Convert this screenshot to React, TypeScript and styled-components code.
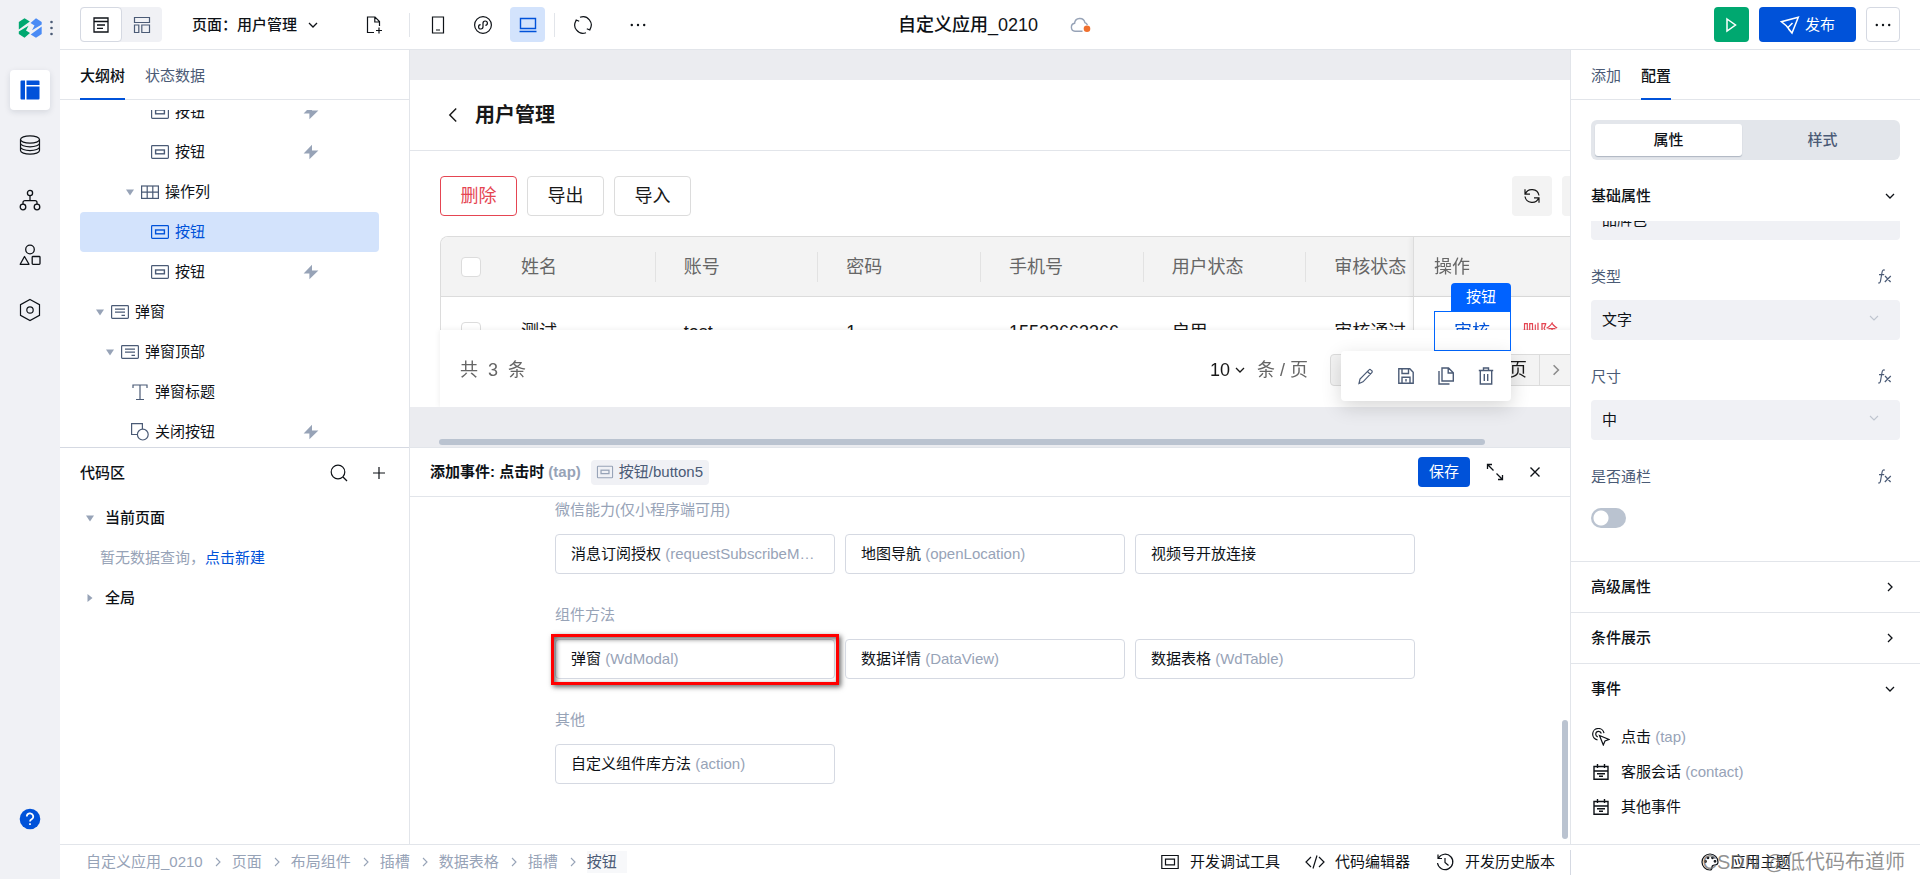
import React from "react";
import styled, { createGlobalStyle, css } from "styled-components";

/* ---------- tokens ---------- */
const c = {
  blue: "#0052d9",
  ink: "#0e1217",
  slate: "#4b5b76",
  mute: "#97a3b7",
  line: "#e2e5ea",
  edge: "#d5d9e2",
  fill: "#f0f1f5",
  select: "#d3e3fc",
  red: "#e54552",
};

const Global = createGlobalStyle`
  * { box-sizing: border-box; }
  body { margin: 0; font: 15px/20px "Liberation Sans", "Noto Sans CJK SC", sans-serif; color: ${c.ink}; background: #fff; }
  button, select, input { font: inherit; color: inherit; margin: 0; }
  button { border: 0; padding: 0; background: none; cursor: pointer; }
  a { text-decoration: none; color: inherit; }
  h1, h2, h3, ul, ol { margin: 0; padding: 0; font: inherit; list-style: none; }
  svg { display: block; flex: none; }
`;

/* ---------- icons ---------- */
type IconProps = { w?: number; h?: number; box?: string; sw?: number; children: React.ReactNode };
const Icon = ({ w = 20, h = 20, box, sw = 1.2, children }: IconProps) => (
  <svg width={w} height={h} viewBox={box ?? `0 0 ${w} ${h}`} fill="none" stroke="currentColor" strokeWidth={sw} aria-hidden="true">
    {children}
  </svg>
);

const Chevron = ({ dir = "down", s = 10, sw = 1.3 }: { dir?: "down" | "right" | "left"; s?: number; sw?: number }) => (
  <Icon w={s} h={s} box="0 0 10 10" sw={sw}>
    <path d={dir === "down" ? "M1 3l4 4 4-4" : dir === "right" ? "M3 1l4 4-4 4" : "M7 1L3 5l4 4"} />
  </Icon>
);
const Caret = ({ open }: { open?: boolean }) => (
  <Icon w={8} h={8}>
    <path fill="#97a3b7" stroke="none" d={open ? "M0 1.500h8L4 7.500z" : "M1.500 0v8l5-4z"} />
  </Icon>
);
const ButtonGlyph = ({ s = 20 }: { s?: number }) => (
  <Icon w={s} h={s} box="0 0 20 20">
    <rect x="1.600" y="3.600" width="16.800" height="12.800" rx="0.800" />
    <rect x="5.600" y="8" width="8.800" height="3.800" strokeWidth="1.400" />
  </Icon>
);
const GridGlyph = () => (
  <Icon>
    <rect x="1.600" y="4" width="16.800" height="12.400" />
    <path d="M1.600 10.200h16.800M7.200 4v12.400M12.800 4v12.400" />
  </Icon>
);
const ModalGlyph = () => (
  <Icon>
    <rect x="1.600" y="3.600" width="16.800" height="12.800" rx="0.800" />
    <path d="M5 7.200h10M5 10.200h10M11.500 13.400h3.500" />
  </Icon>
);
const TextGlyph = () => (
  <Icon>
    <path d="M3 6V3h14v3M10 3v14.500M6 17.500h8" />
  </Icon>
);
const ShapeGlyph = () => (
  <Icon>
    <path d="M8 12.500H1.600V1.600h10.800V7" />
    <circle cx="12.800" cy="12.600" r="5.400" />
  </Icon>
);
const Bolt = () => (
  <Icon w={16} h={16}>
    <path fill="#97a3b7" stroke="none" d="M9 .8L.6 9.500h5.800v5.700L15.400 6.500H9z" />
  </Icon>
);
const Dots = () => (
  <Icon w={16} h={4}>
    <g fill="currentColor" stroke="none">
      <circle cx="1.800" cy="2" r="1.200" />
      <circle cx="8" cy="2" r="1.200" />
      <circle cx="14.200" cy="2" r="1.200" />
    </g>
  </Icon>
);
const EventGlyph = () => (
  <Icon w={18} h={18} sw={1.4}>
    <path d="M2 3.500h14v12.700H2zM2 8h14M5.500 1v4M12.500 1v4M5 10.800h8M7 13.300h4" />
  </Icon>
);
const FxGlyph = () => (
  <Icon w={16} h={18}>
    <path d="M7.800 2.200C6.400 1.400 5.400 2.300 5.100 4L3.500 13c-.3 1.800-1.200 2.300-2.300 1.800M2 6.700h5.200M8 8l5.600 6M13.800 8L7.800 14" />
  </Icon>
);
const RefreshGlyph = () => (
  <Icon w={18} h={18}>
    <path d="M2.200 7.200A7.200 7.200 0 0 1 16 8.500M15.800 10.800A7.200 7.200 0 0 1 2 9.500M2 2.200v5h5M16 15.800v-5h-5" />
  </Icon>
);

/* ---------- shell ---------- */
const Shell = styled.div`
  display: flex;
  height: 100vh;
  overflow: hidden;
`;
const Rail = styled.nav`
  flex: none;
  width: 60px;
  background: ${c.fill};
  display: flex;
  flex-direction: column;
  align-items: center;
  padding-bottom: 40px;
`;
const Brand = styled.div`
  height: 55px;
  width: 60px;
  padding-left: 18px;
  display: flex;
  align-items: center;
  gap: 8px;
`;
const RailItems = styled.div`
  flex: 1;
  display: flex;
  flex-direction: column;
  gap: 15px;
  padding-top: 15px;
`;
const RailButton = styled.button<{ $on?: boolean }>`
  width: 40px;
  height: 40px;
  display: grid;
  place-items: center;
  border-radius: 4px;
  ${(p) => p.$on && css`
    background: #fff;
    color: ${c.blue};
    box-shadow: 0 2px 6px rgba(20, 30, 60, 0.12);
  `}
`;
const Work = styled.div`
  flex: 1;
  min-width: 0;
  display: flex;
  flex-direction: column;
`;

/* ---------- header ---------- */
const Header = styled.header`
  flex: none;
  height: 50px;
  border-bottom: 1px solid ${c.line};
  padding: 0 20px;
  display: grid;
  grid-template-columns: 1fr auto 1fr;
  align-items: center;
`;
const HeaderGroup = styled.div<{ $gap?: number; $end?: boolean }>`
  display: flex;
  align-items: center;
  gap: ${(p) => p.$gap ?? 0}px;
  justify-content: ${(p) => (p.$end ? "flex-end" : "flex-start")};
`;
const ViewSwitch = styled.div`
  display: flex;
  border-radius: 4px;
  background: ${c.fill};
  color: ${c.slate};
`;
const ViewOption = styled.button<{ $on?: boolean }>`
  width: ${(p) => (p.$on ? 42 : 40)}px;
  height: 35px;
  display: grid;
  place-items: center;
  border-radius: 4px;
  ${(p) => p.$on && css`background: #fff; border: 1px solid ${c.edge}; color: ${c.ink};`}
`;
const PageMenu = styled.button`
  display: flex;
  align-items: center;
  gap: 11px;
  margin: 0 38px 0 30px;
  font-weight: 500;
`;
const Tool = styled.button<{ $on?: boolean }>`
  width: 35px;
  height: 35px;
  display: grid;
  place-items: center;
  border-radius: 4px;
  ${(p) => p.$on && css`background: ${c.select}; color: ${c.blue};`}
`;
const Rule = styled.span<{ $left: number }>`
  width: 1px;
  height: 24px;
  margin: 0 10px 0 ${(p) => p.$left}px;
  background: ${c.line};
`;
const More = styled(Tool)`
  margin-left: 20px;
`;
const AppTitle = styled.div`
  display: flex;
  align-items: center;
  gap: 32px;
  padding-left: 10px;
  color: ${c.mute};
`;
const AppName = styled.h1`
  font-size: 18px;
  line-height: 24px;
  font-weight: 500;
  color: ${c.ink};
`;
const HeaderButton = styled.button<{ $kind: "run" | "main" | "plain" }>`
  height: 35px;
  min-width: 34px;
  display: flex;
  align-items: center;
  justify-content: center;
  gap: 5px;
  border-radius: 4px;
  color: #fff;
  ${(p) => p.$kind === "run" && css`width: 35px; background: #00a870;`}
  ${(p) => p.$kind === "main" && css`padding: 0 21px; background: ${c.blue};`}
  ${(p) => p.$kind === "plain" && css`border: 1px solid ${c.edge}; color: ${c.ink};`}
`;

/* ---------- side panels ---------- */
const Main = styled.div`
  flex: 1;
  min-height: 0;
  display: flex;
`;
const Side = styled.aside<{ $side: "left" | "right" }>`
  flex: none;
  width: 350px;
  border-${(p) => (p.$side === "left" ? "right" : "left")}: 1px solid ${c.line};
  display: flex;
  flex-direction: column;
`;
const Tabs = styled.div`
  flex: none;
  height: 50px;
  padding-left: 20px;
  border-bottom: 1px solid ${c.line};
  display: flex;
  gap: 20px;
`;
const Tab = styled.button<{ $on?: boolean }>`
  height: 50px;
  padding-top: 4px;
  color: ${c.slate};
  border-bottom: 2px solid transparent;
  ${(p) => p.$on && css`color: ${c.ink}; font-weight: 500; border-color: ${c.blue};`}
`;
const Outline = styled.section`
  flex: 1 1 398px;
  min-height: 0;
  display: flex;
  flex-direction: column;
  border-bottom: 1px solid ${c.edge};
`;
const TreeView = styled.div`
  flex: 1;
  min-height: 0;
  overflow: hidden;
  margin: 10px 30px 0 20px;
`;
const Tree = styled.ul`
  margin-top: -18px;
`;
const TreeRow = styled.li<{ $indent: number; $on?: boolean }>`
  height: 40px;
  padding: 0 60px 0 ${(p) => p.$indent}px;
  display: flex;
  align-items: center;
  border-radius: 4px;
  color: ${(p) => (p.$on ? c.blue : c.slate)};
  background: ${(p) => (p.$on ? c.select : "transparent")};
`;
const CaretSlot = styled.span`
  width: 20px;
  display: grid;
  place-items: center;
`;
const TreeLabel = styled.span<{ $on?: boolean }>`
  flex: 1;
  padding-left: 5px;
  color: ${(p) => (p.$on ? c.blue : c.ink)};
`;
const CodeArea = styled.section`
  flex: 1 1 396px;
`;
const CodeHead = styled.div`
  height: 50px;
  padding: 0 20px;
  display: flex;
  align-items: center;
  gap: 20px;
`;
const CodeTitle = styled.h2`
  flex: 1;
  font-weight: 500;
`;
const MiniButton = styled.button`
  width: 20px;
  height: 20px;
  display: grid;
  place-items: center;
`;
const CodeRow = styled.div<{ $strong?: boolean }>`
  height: 40px;
  padding-left: ${(p) => (p.$strong ? 20 : 40)}px;
  display: flex;
  align-items: center;
  gap: ${(p) => (p.$strong ? 5 : 0)}px;
  font-weight: ${(p) => (p.$strong ? 500 : 400)};
  color: ${(p) => (p.$strong ? c.ink : c.mute)};
`;
const Link = styled.a`
  color: ${c.blue};
`;

/* ---------- canvas ---------- */
const Center = styled.main`
  flex: 1;
  min-width: 0;
  display: flex;
  flex-direction: column;
`;
const Canvas = styled.section`
  flex: 1 1 398px;
  min-height: 0;
  overflow: hidden;
  padding-top: 30px;
  background: #ebecf0;
  border-bottom: 1px solid ${c.line};
  color: #181818;
`;
const Sheet = styled.div`
  width: calc(100% + 80px);
  background: #fff;
`;
const SheetHead = styled.div`
  height: 71px;
  padding-left: 35px;
  border-bottom: 1px solid ${c.line};
  display: flex;
  align-items: center;
  gap: 14px;
`;
const SheetTitle = styled.h2`
  font-size: 20px;
  line-height: 28px;
  font-weight: 700;
`;
const SheetBody = styled.div`
  padding: 25px 30px 0;
`;
const ActionBar = styled.div`
  display: flex;
  gap: 10px;
  margin-bottom: 20px;
`;
const ActionButton = styled.button<{ $danger?: boolean }>`
  width: 77px;
  height: 40px;
  font-size: 18px;
  border-radius: 4px;
  border: 1px solid ${(p) => (p.$danger ? c.red : "#dcdcdc")};
  color: ${(p) => (p.$danger ? c.red : "#181818")};
`;
const SquareButton = styled.button`
  width: 40px;
  height: 40px;
  display: grid;
  place-items: center;
  border-radius: 4px;
  background: #f3f3f3;
`;
const SquareGroup = styled.div`
  display: flex;
  gap: 10px;
  margin-left: auto;
  padding-right: 18px;
`;
const TableArea = styled.div`
  position: relative;
`;
const TableClip = styled.div`
  height: 94px;
  overflow: hidden;
  border: 1px solid #dcdcdc;
  border-bottom: 0;
  border-radius: 8px 8px 0 0;
`;
const DataTable = styled.table`
  table-layout: fixed;
  width: 1234px;
  border-collapse: separate;
  border-spacing: 0;
  font-size: 18px;
  line-height: 24px;
`;
const Col = styled.col<{ $width?: number }>`
  width: ${(p) => (p.$width ? `${p.$width}px` : "auto")};
`;
const Th = styled.th<{ $rule?: boolean }>`
  height: 60px;
  padding: 0 0 0 28px;
  text-align: left;
  font-weight: 400;
  color: #666;
  border-bottom: 1px solid #dcdcdc;
  background: ${(p) => (p.$rule ? "linear-gradient(#e2e2e2, #e2e2e2) right center / 1px 30px no-repeat" : "none")} #f3f3f3;
`;
const Td = styled.td`
  height: 70px;
  padding: 0 0 0 28px;
  background: #fff;
`;
const pinned = css`
  position: sticky;
  right: 0;
  padding-left: 20px;
  border-left: 1px solid #dcdcdc;
  box-shadow: -3px 0 4px rgba(0, 0, 0, 0.04);
`;
const PinTh = styled(Th)`${pinned}`;
const PinTd = styled(Td)`${pinned}`;
const CheckTh = styled(Th)`padding-left: 20px;`;
const CheckTd = styled(Td)`padding-left: 20px;`;
const Check = styled.input`
  appearance: none;
  display: block;
  width: 20px;
  height: 20px;
  border: 1px solid #dcdcdc;
  border-radius: 4px;
  background: #fff;
`;
const CellButton = styled.button<{ $danger?: boolean }>`
  width: 68px;
  padding-left: 20px;
  text-align: left;
  color: ${(p) => (p.$danger ? c.red : c.blue)};
`;
const Pager = styled.div`
  position: relative;
  height: 77px;
  padding: 2px 0 0 20px;
  display: flex;
  align-items: center;
  background: #fff;
  box-shadow: 0 0 6px rgba(0, 0, 0, 0.08);
  clip-path: inset(-10px -10px 0 -10px);
  font-size: 18px;
  line-height: 24px;
  color: #666;
`;
const Total = styled.span`
  flex: 1;
  white-space: pre;
`;
const PageSize = styled.button`
  display: flex;
  align-items: center;
  gap: 5px;
  margin-right: 12px;
  color: #181818;
`;
const PageBox = styled.div`
  display: flex;
  margin-left: 22px;
  height: 32px;
  width: 290px;
  background: #f3f3f3;
  border: 1px solid #dcdcdc;
  border-radius: 4px;
  color: #181818;
`;
const PageField = styled.span`
  width: 209px;
  padding-right: 12px;
  line-height: 30px;
  text-align: right;
  border-right: 1px solid #dcdcdc;
`;
const PageNext = styled.button`
  width: 32px;
  display: grid;
  place-items: center;
  color: #8b8b8b;
`;
const Selection = styled.div`
  position: absolute;
  top: 75px;
  right: 109px;
  width: 77px;
  height: 40px;
  border: 1px solid #0066ff;
`;
const SelectionTag = styled.span`
  position: absolute;
  right: -1px;
  bottom: 39px;
  width: 60px;
  line-height: 28px;
  text-align: center;
  color: #fff;
  background: #0062ff;
  border-radius: 4px 4px 0 0;
`;
const SelectionTools = styled.div`
  position: absolute;
  right: -1px;
  top: 39px;
  width: 170px;
  height: 50px;
  padding: 0 5px;
  display: flex;
  align-items: center;
  background: #fff;
  border-radius: 4px;
  box-shadow: 0 6px 20px rgba(0, 0, 0, 0.16);
  color: ${c.slate};
`;
const SelectionTool = styled.button`
  flex: 1;
  display: grid;
  place-items: center;
`;
const ScrollX = styled.div`
  height: 6px;
  margin: 32px 85px 0 29px;
  border-radius: 3px;
  background: #bac3d0;
`;

/* ---------- event panel ---------- */
const EventPanel = styled.section`
  flex: 1 1 396px;
  min-height: 0;
  display: flex;
  flex-direction: column;
`;
const EventHead = styled.div`
  flex: none;
  height: 49px;
  padding: 0 15px 0 20px;
  border-bottom: 1px solid ${c.line};
  display: flex;
  align-items: center;
`;
const EventTitle = styled.h2`
  font-weight: 700;
`;
const Hint = styled.span`
  color: ${c.mute};
`;
const TargetTag = styled.span`
  flex: none;
  display: flex;
  align-items: center;
  gap: 5px;
  height: 25px;
  margin: 0 auto 0 10px;
  padding: 0 6px 0 5px;
  border-radius: 4px;
  background: ${c.fill};
  color: ${c.mute};
`;
const TargetName = styled.span`
  color: ${c.slate};
`;
const SaveButton = styled.button`
  width: 52px;
  height: 30px;
  border-radius: 4px;
  background: ${c.blue};
  color: #fff;
`;
const HeadIcon = styled.button`
  width: 40px;
  height: 30px;
  display: grid;
  place-items: center;
`;
const HeadIcons = styled.div`
  display: flex;
  margin-left: 5px;
`;
const EventBody = styled.div`
  flex: 1;
  min-height: 0;
  overflow: hidden;
  display: flex;
  padding: 3px 2px 0 0;
`;
const Groups = styled.div`
  flex: 1;
  min-width: 0;
  padding: 0 12px 0 10px;
`;
const Group = styled.section`
  max-width: 860px;
  margin: 0 auto 31px;
`;
const GroupTitle = styled.h3`
  color: ${c.mute};
  margin-bottom: 14px;
`;
const Cards = styled.div`
  display: grid;
  grid-template-columns: repeat(3, minmax(0, 1fr));
  gap: 10px;
`;
const CardSlot = styled.div`
  position: relative;
`;
const Card = styled.button`
  display: block;
  width: 100%;
  height: 40px;
  padding: 0 15px;
  text-align: left;
  border: 1px solid ${c.edge};
  border-radius: 4px;
`;
const CardText = styled.span`
  display: block;
  overflow: hidden;
  white-space: nowrap;
  text-overflow: ellipsis;
  color: ${c.mute};
`;
const CardName = styled.span`
  color: ${c.ink};
`;
const Marker = styled.span`
  position: absolute;
  inset: -5px -4px -6px -4px;
  border: 3px solid #f00;
  box-shadow: 2px 2px 5px rgba(0, 0, 0, 0.6), inset 2px 2px 5px rgba(0, 0, 0, 0.6);
  pointer-events: none;
`;
const ScrollY = styled.div`
  flex: none;
  width: 6px;
  height: 119px;
  margin: auto 0 5px;
  border-radius: 3px;
  background: #bac3d0;
`;

/* ---------- property panel ---------- */
const Segment = styled.div`
  flex: none;
  margin: 20px 20px 11px;
  height: 40px;
  padding: 4px;
  display: flex;
  gap: 7px;
  border-radius: 6px;
  background: #e3e6eb;
`;
const SegmentOption = styled.button<{ $on?: boolean }>`
  flex: 1;
  border-radius: 3px;
  font-weight: 500;
  color: ${(p) => (p.$on ? c.ink : c.slate)};
  ${(p) => p.$on && css`background: #fff; box-shadow: 0 1px 1px rgba(75, 91, 118, 0.35);`}
`;
const SectionHead = styled.button<{ $line?: boolean }>`
  flex: none;
  width: 100%;
  height: ${(p) => (p.$line ? 51 : 50)}px;
  padding: 0 25px 0 20px;
  border-top: ${(p) => (p.$line ? `1px solid ${c.line}` : "0")};
  display: flex;
  align-items: center;
  justify-content: space-between;
  font-weight: 500;
`;
const Fields = styled.div`
  flex: none;
  padding: 0 20px;
`;
const ScrolledField = styled.div`
  height: 19px;
  overflow: hidden;
  display: flex;
  align-items: flex-end;
`;
const FieldHead = styled.div`
  height: 60px;
  padding: 14px 7px 0 0;
  display: flex;
  align-items: center;
  justify-content: space-between;
  color: ${c.slate};
`;
const SelectBox = styled.div`
  width: 100%;
  flex: none;
  display: grid;
  align-items: center;
  color: #bfc5cf;
  & > * { grid-area: 1 / 1; }
  & > svg { justify-self: end; margin: 0 21px 4px 0; pointer-events: none; }
`;
const Select = styled.select`
  appearance: none;
  width: 100%;
  height: 40px;
  padding: 0 40px 0 11px;
  border: 0;
  border-radius: 4px;
  background: ${c.fill};
  color: ${c.ink};
`;
const Switch = styled.input`
  appearance: none;
  display: block;
  width: 35px;
  height: 20px;
  margin: 8px 0 33px;
  border-radius: 10px;
  background: radial-gradient(circle at 10px 10px, #fff 7px, transparent 8px) #bac3d0;
`;
const EventList = styled.ul`
  padding: 5px 20px 0;
`;
const EventItem = styled.li`
  height: 35px;
  display: flex;
  align-items: center;
  gap: 11px;
  padding-left: 1px;
`;

/* ---------- footer ---------- */
const Footer = styled.footer`
  position: relative;
  flex: none;
  height: 35px;
  border-top: 1px solid ${c.line};
  display: flex;
  align-items: center;
`;
const Crumbs = styled.ol`
  flex: 1;
  padding-left: 26px;
  display: flex;
  align-items: center;
  color: ${c.mute};
`;
const Crumb = styled.li<{ $last?: boolean }>`
  display: flex;
  align-items: center;
  gap: 10px;
  margin-right: ${(p) => (p.$last ? 0 : 9)}px;
  ${(p) => p.$last && css`color: ${c.slate}; background: #f7f8fa; padding: 1px 10px 1px 0;`}
`;
const FooterTools = styled.div`
  display: flex;
  gap: 25px;
  padding-right: 15px;
`;
const FooterButton = styled.button`
  display: flex;
  align-items: center;
  gap: 10px;
`;
const FooterSide = styled.div`
  width: 350px;
  height: 25px;
  border-left: 1px solid ${c.edge};
  display: flex;
  align-items: center;
  justify-content: center;
`;
const Watermark = styled.span`
  position: absolute;
  right: 15px;
  top: 2px;
  font: 20px/30px "Liberation Sans", "Noto Sans CJK SC", sans-serif;
  color: rgba(110, 110, 110, 0.75);
`;

/* ---------- data ---------- */
type Node = { label: string; indent: number; icon: React.ReactNode; open?: boolean; bolt?: boolean; on?: boolean };
const nodes: Node[] = [
  { label: "按钮", indent: 50, icon: <ButtonGlyph />, bolt: true },
  { label: "按钮", indent: 50, icon: <ButtonGlyph />, bolt: true },
  { label: "操作列", indent: 40, icon: <GridGlyph />, open: true },
  { label: "按钮", indent: 50, icon: <ButtonGlyph />, on: true },
  { label: "按钮", indent: 50, icon: <ButtonGlyph />, bolt: true },
  { label: "弹窗", indent: 10, icon: <ModalGlyph />, open: true },
  { label: "弹窗顶部", indent: 20, icon: <ModalGlyph />, open: true },
  { label: "弹窗标题", indent: 30, icon: <TextGlyph /> },
  { label: "关闭按钮", indent: 30, icon: <ShapeGlyph />, bolt: true },
];

const columns = ["姓名", "账号", "密码", "手机号", "用户状态", "审核状态"];
const row = ["测试", "test", "1", "15522663366", "启用", "审核通过"];

type Method = { name: string; code?: string; marked?: boolean };
const groups: { title: string; items: Method[] }[] = [
  {
    title: "微信能力(仅小程序端可用)",
    items: [
      { name: "消息订阅授权", code: "requestSubscribeMessage" },
      { name: "地图导航", code: "openLocation" },
      { name: "视频号开放连接" },
    ],
  },
  {
    title: "组件方法",
    items: [
      { name: "弹窗", code: "WdModal", marked: true },
      { name: "数据详情", code: "DataView" },
      { name: "数据表格", code: "WdTable" },
    ],
  },
  { title: "其他", items: [{ name: "自定义组件库方法", code: "action" }] },
];

const crumbs = ["自定义应用_0210", "页面", "布局组件", "插槽", "数据表格", "插槽", "按钮"];

/* ---------- parts ---------- */
const LeftRail = () => (
  <Rail>
    <Brand>
      <svg width="24" height="20" viewBox="0 0 24 20" aria-hidden="true">
        <path fill="#00a870" d="M.8 4L6.500.3l5.300 3.200L.8 11.500z" />
        <path fill="#00a870" d="M.8 13.500L10.500 7.800 8 12.500l4 2.500-5.500 4.700-5.700-3.700z" />
        <path fill="#4a8bf5" d="M23.700 16L18 19.700l-5.300-3.200 11-8z" />
        <path fill="#4a8bf5" d="M23.700 6.500L14 12.200l2.500-4.700-4-2.500L18 .3l5.700 3.700z" />
      </svg>
      <Icon w={4} h={16}>
        <g fill="#4b5b76" stroke="none">
          <circle cx="1.500" cy="2" r="1.300" />
          <circle cx="1.500" cy="8" r="1.300" />
          <circle cx="1.500" cy="14" r="1.300" />
        </g>
      </Icon>
    </Brand>
    <RailItems>
      <RailButton $on aria-label="页面设计">
        <Icon>
          <path fill="currentColor" stroke="none" d="M1.500.5H5v19H1.500a1 1 0 0 1-1-1v-17a1 1 0 0 1 1-1zM6.500.5h12a1 1 0 0 1 1 1V5h-13zM6.500 6.500h13v12a1 1 0 0 1-1 1h-12z" />
        </Icon>
      </RailButton>
      <RailButton aria-label="数据">
        <Icon w={22} h={22}>
          <ellipse cx="11" cy="5.500" rx="9.500" ry="3.700" />
          <path d="M1.500 5.500v11c0 2 4.300 3.700 9.500 3.700s9.500-1.700 9.500-3.700v-11M1.500 9.200c0 2 4.300 3.700 9.500 3.700s9.500-1.700 9.500-3.700M1.500 12.900c0 2 4.300 3.700 9.500 3.700s9.500-1.700 9.500-3.700" />
        </Icon>
      </RailButton>
      <RailButton aria-label="流程">
        <Icon w={22} h={22} sw={1.3}>
          <circle cx="11" cy="4" r="2.600" />
          <circle cx="4" cy="18" r="2.800" />
          <circle cx="18" cy="18" r="2.800" />
          <path d="M11 6.600v5M4 15.200v-1.600a2 2 0 0 1 2-2h10a2 2 0 0 1 2 2v1.600" />
        </Icon>
      </RailButton>
      <RailButton aria-label="组件">
        <Icon w={22} h={22} sw={1.3}>
          <circle cx="11" cy="5.500" r="4.300" />
          <path d="M5.500 12.500L10 20.300H1.200z" strokeLinejoin="round" />
          <rect x="13.200" y="12.500" width="7.800" height="7.800" rx="0.800" />
        </Icon>
      </RailButton>
      <RailButton aria-label="设置">
        <Icon w={22} h={24}>
          <path d="M11 1.500l9.500 5.200v10.600L11 22.500l-9.500-5.200V6.700z" />
          <circle cx="11" cy="12" r="3.200" />
        </Icon>
      </RailButton>
    </RailItems>
    <RailButton aria-label="帮助">
      <Icon w={22} h={22}>
        <circle cx="11" cy="11" r="10.300" fill="#0052d9" stroke="none" />
        <path stroke="#fff" strokeWidth="1.700" d="M7.800 8.600a3.200 3.200 0 1 1 4.800 2.700c-1 .6-1.600 1.100-1.600 2.200M11 15.200v1.800" />
      </Icon>
    </RailButton>
  </Rail>
);

const TopBar = () => (
  <Header>
    <HeaderGroup>
      <ViewSwitch>
        <ViewOption $on aria-label="编辑视图">
          <Icon w={18} h={18} sw={1.3}>
            <path d="M2 2h14v14H2zM2 5.500h14M5 9h8M5 12.300h6" />
          </Icon>
        </ViewOption>
        <ViewOption aria-label="布局视图">
          <Icon w={18} h={18}>
            <path d="M1.500 1.500h15v5h-15zM1.500 9h4.300v7.500H1.500zM8.800 9h7.700v7.500H8.800z" />
          </Icon>
        </ViewOption>
      </ViewSwitch>
      <PageMenu>页面：用户管理<Chevron /></PageMenu>
      <Tool aria-label="新建页面">
        <Icon w={18} h={20}>
          <path d="M9 17.500H2.500V2H10l4.500 4.500v4.500M9.800 2v5h4.700M14 12.500v6M11 15.500h6" />
        </Icon>
      </Tool>
      <Rule $left={18} />
      <HeaderGroup $gap={10}>
        <Tool aria-label="手机">
          <Icon w={14} h={18}>
            <path d="M1.500 1h11v16h-11zM5 14h4" />
          </Icon>
        </Tool>
        <Tool aria-label="小程序">
          <Icon>
            <circle cx="10" cy="10" r="8.400" />
            <path d="M7.600 9.600a2.200 2.200 0 1 0 2.400 2.200V8.200a2.200 2.200 0 1 1 2.400 2.200" />
          </Icon>
        </Tool>
        <Tool $on aria-label="电脑">
          <Icon sw={1.4}>
            <path d="M2.500 3.500h15v10h-15zM1.500 16.500h17" />
          </Icon>
        </Tool>
      </HeaderGroup>
      <Rule $left={9} />
      <Tool aria-label="刷新">
        <Icon>
          <path d="M7 2.300A8.200 8.200 0 0 1 16.800 14.500M13 17.700A8.200 8.200 0 0 1 3.200 5.500M2 8l1.200-3 3 1.300M18 12l-1.200 3-3-1.300" />
        </Icon>
      </Tool>
      <More aria-label="更多"><Dots /></More>
    </HeaderGroup>
    <AppTitle>
      <AppName>自定义应用_0210</AppName>
      <Icon w={22} h={18} sw={1.4}>
        <path d="M12.500 15.200H5A4 4 0 0 1 4.600 7.300a5.200 5.200 0 0 1 10.300-.6 4 4 0 0 1 2.500 2.300" />
        <circle cx="17" cy="12.700" r="3.300" fill="#f0702e" stroke="none" />
      </Icon>
    </AppTitle>
    <HeaderGroup $gap={10} $end>
      <HeaderButton $kind="run" aria-label="预览">
        <Icon w={14} h={16} sw={1.5}>
          <path d="M3 2l8.500 6L3 14z" />
        </Icon>
      </HeaderButton>
      <HeaderButton $kind="main">
        <Icon sw={1.5}>
          <path d="M18.300 2.200L1.500 6.700l4.800 4.100L12 18zM18.300 2.200L12 18l-3.500-4M8 12.500l4.500-4.500" />
        </Icon>
        发布
      </HeaderButton>
      <HeaderButton $kind="plain" aria-label="更多操作"><Dots /></HeaderButton>
    </HeaderGroup>
  </Header>
);

const LeftPanel = () => (
  <Side $side="left">
    <Outline>
      <Tabs>
        <Tab $on>大纲树</Tab>
        <Tab>状态数据</Tab>
      </Tabs>
      <TreeView>
        <Tree>
          {nodes.map((n, i) => (
            <TreeRow key={i} $indent={n.indent} $on={n.on}>
              <CaretSlot>{n.open && <Caret open />}</CaretSlot>
              {n.icon}
              <TreeLabel $on={n.on}>{n.label}</TreeLabel>
              {n.bolt && <Bolt />}
            </TreeRow>
          ))}
        </Tree>
      </TreeView>
    </Outline>
    <CodeArea>
      <CodeHead>
        <CodeTitle>代码区</CodeTitle>
        <MiniButton aria-label="搜索">
          <Icon w={18} h={18}>
            <circle cx="8" cy="8" r="6.800" />
            <path d="M13 13l4 4" />
          </Icon>
        </MiniButton>
        <MiniButton aria-label="新增">
          <Icon w={14} h={14}><path d="M7 1v12M1 7h12" /></Icon>
        </MiniButton>
      </CodeHead>
      <CodeRow $strong><CaretSlot><Caret open /></CaretSlot>当前页面</CodeRow>
      <CodeRow>暂无数据查询，<Link href="#new">点击新建</Link></CodeRow>
      <CodeRow $strong><CaretSlot><Caret /></CaretSlot>全局</CodeRow>
    </CodeArea>
  </Side>
);

const CanvasView = () => (
  <Canvas>
    <Sheet>
      <SheetHead>
        <Chevron dir="left" s={16} sw={0.9} />
        <SheetTitle>用户管理</SheetTitle>
      </SheetHead>
      <SheetBody>
        <ActionBar>
          <ActionButton $danger>删除</ActionButton>
          <ActionButton>导出</ActionButton>
          <ActionButton>导入</ActionButton>
          <SquareGroup>
            <SquareButton aria-label="刷新表格"><RefreshGlyph /></SquareButton>
            <SquareButton aria-label="列设置" />
          </SquareGroup>
        </ActionBar>
        <TableArea>
          <TableClip>
            <DataTable>
              <colgroup>
                <Col $width={52} />
                {columns.map((n) => <Col key={n} />)}
                <Col $width={206} />
              </colgroup>
              <thead>
                <tr>
                  <CheckTh><Check type="checkbox" aria-label="全选" /></CheckTh>
                  {columns.map((n) => <Th key={n} $rule>{n}</Th>)}
                  <PinTh>操作</PinTh>
                </tr>
              </thead>
              <tbody>
                <tr>
                  <CheckTd><Check type="checkbox" aria-label="选择此行" /></CheckTd>
                  {row.map((v) => <Td key={v}>{v}</Td>)}
                  <PinTd>
                    <CellButton>审核</CellButton>
                    <CellButton $danger>删除</CellButton>
                  </PinTd>
                </tr>
              </tbody>
            </DataTable>
          </TableClip>
          <Pager>
            <Total>共  3  条</Total>
            <PageSize>10<Chevron /></PageSize>
            条 / 页
            <PageBox>
              <PageField>页</PageField>
              <PageNext aria-label="下一页"><Chevron dir="right" s={12} /></PageNext>
            </PageBox>
          </Pager>
          <Selection>
            <SelectionTag>按钮</SelectionTag>
            <SelectionTools>
              <SelectionTool aria-label="编辑">
                <Icon w={18} h={18}><path d="M2 16.500l1-4.500L12 2.800a1.200 1.200 0 0 1 1.800 0l1 1a1.200 1.200 0 0 1 0 1.800L6 14.800zM10.500 4.500l3 3" /></Icon>
              </SelectionTool>
              <SelectionTool aria-label="保存为模板">
                <Icon w={18} h={18} sw={1.4}><path d="M1.800 1.800h11l3.400 3.400v11H1.800zM5 1.800v4.700h6.500V1.800M5 16.200v-6h8v6M9 12v2.500" /></Icon>
              </SelectionTool>
              <SelectionTool aria-label="复制">
                <Icon w={18} h={20} sw={1.4}><path d="M5 2h6.500l4.800 4.800V15H5zM11.200 2v5h5M2 5v13h10.500" /></Icon>
              </SelectionTool>
              <SelectionTool aria-label="移除">
                <Icon w={16} h={20} sw={1.4}><path d="M.8 4.500h14.400M2.300 4.500V18h11.400V4.500M5.500 4.500V2h5v2.500M6.300 8v7M9.700 8v7" /></Icon>
              </SelectionTool>
            </SelectionTools>
          </Selection>
        </TableArea>
      </SheetBody>
    </Sheet>
    <ScrollX />
  </Canvas>
);

const EventEditor = () => (
  <EventPanel>
    <EventHead>
      <EventTitle>添加事件: 点击时 <Hint>(tap)</Hint></EventTitle>
      <TargetTag><ButtonGlyph s={18} /><TargetName>按钮/button5</TargetName></TargetTag>
      <SaveButton>保存</SaveButton>
      <HeadIcons>
        <HeadIcon aria-label="展开">
          <Icon w={18} h={18} sw={1.3}><path d="M1.500 6V1.500H6M1.500 1.500l6 6M16.500 12v4.500H12M16.500 16.500l-6-6" /></Icon>
        </HeadIcon>
        <HeadIcon aria-label="关闭">
          <Icon w={12} h={12} sw={1.4}><path d="M1.500 1.500l9 9M10.500 1.500l-9 9" /></Icon>
        </HeadIcon>
      </HeadIcons>
    </EventHead>
    <EventBody>
      <Groups>
        {groups.map((g) => (
          <Group key={g.title}>
            <GroupTitle>{g.title}</GroupTitle>
            <Cards>
              {g.items.map((m) => (
                <CardSlot key={m.name}>
                  <Card>
                    <CardText><CardName>{m.name}</CardName>{m.code && ` (${m.code})`}</CardText>
                  </Card>
                  {m.marked && <Marker />}
                </CardSlot>
              ))}
            </Cards>
          </Group>
        ))}
      </Groups>
      <ScrollY />
    </EventBody>
  </EventPanel>
);

const SelectField = ({ label, value }: { label: string; value: string }) => (
  <SelectBox>
    <Select aria-label={label} defaultValue={value}>
      <option>{value}</option>
    </Select>
    <Chevron sw={1.1} />
  </SelectBox>
);

const RightPanel = () => (
  <Side $side="right">
    <Tabs>
      <Tab>添加</Tab>
      <Tab $on>配置</Tab>
    </Tabs>
    <Segment>
      <SegmentOption $on>属性</SegmentOption>
      <SegmentOption>样式</SegmentOption>
    </Segment>
    <SectionHead>基础属性<Chevron /></SectionHead>
    <Fields>
      <ScrolledField><SelectField label="颜色" value="品牌色" /></ScrolledField>
      <FieldHead>类型<FxGlyph /></FieldHead>
      <SelectField label="类型" value="文字" />
      <FieldHead>尺寸<FxGlyph /></FieldHead>
      <SelectField label="尺寸" value="中" />
      <FieldHead><label htmlFor="full-width">是否通栏</label><FxGlyph /></FieldHead>
      <Switch id="full-width" type="checkbox" role="switch" />
    </Fields>
    <SectionHead $line>高级属性<Chevron dir="right" /></SectionHead>
    <SectionHead $line>条件展示<Chevron dir="right" /></SectionHead>
    <SectionHead $line>事件<Chevron /></SectionHead>
    <EventList>
      <EventItem>
        <Icon w={18} h={18}>
          <path d="M5.500 11.800A5.700 5.700 0 1 1 12 5.200M5.800 8.800a2.800 2.800 0 1 1 3.500-3.300" />
          <path d="M7.500 7.500l9.500 4-4 1.500-1.700 4z" />
        </Icon>
        <span>点击 <Hint>(tap)</Hint></span>
      </EventItem>
      <EventItem><EventGlyph /><span>客服会话 <Hint>(contact)</Hint></span></EventItem>
      <EventItem><EventGlyph /><span>其他事件</span></EventItem>
    </EventList>
  </Side>
);

const BottomBar = () => (
  <Footer>
    <Crumbs>
      {crumbs.map((t, i) => (
        <Crumb key={i} $last={i === crumbs.length - 1}>
          <a href="#node">{t}</a>
          {i < crumbs.length - 1 && <Chevron dir="right" sw={1.1} />}
        </Crumb>
      ))}
    </Crumbs>
    <FooterTools>
      <FooterButton>
        <Icon><path d="M1.800 3.500h16.400v13H1.800zM5.500 7.200h9v5.600h-9z" /></Icon>
        开发调试工具
      </FooterButton>
      <FooterButton>
        <Icon><path d="M6 5L1 10l5 5M14 5l5 5-5 5M12 3.500l-4 13" /></Icon>
        代码编辑器
      </FooterButton>
      <FooterButton>
        <Icon><path d="M3.500 6a7.700 7.700 0 1 1-1 5M3 2.500V6.500h4M10 6v4.500l3.500 3" /></Icon>
        开发历史版本
      </FooterButton>
    </FooterTools>
    <FooterSide>
      <FooterButton>
        <Icon>
          <path d="M10 18a8 8 0 1 1 8-8c0 2.500-1.800 3-3.500 3-1.600 0-2.500.9-2.500 2.200S11.500 18 10 18z" />
          <circle cx="5.500" cy="9.500" r=".8" /><circle cx="8" cy="5.800" r=".8" /><circle cx="12.500" cy="5.800" r=".8" /><circle cx="15" cy="9.300" r=".8" />
        </Icon>
        应用主题
      </FooterButton>
    </FooterSide>
    <Watermark>CSDN @低代码布道师</Watermark>
  </Footer>
);

export default function App() {
  return (
    <>
      <Global />
      <Shell>
        <LeftRail />
        <Work>
          <TopBar />
          <Main>
            <LeftPanel />
            <Center>
              <CanvasView />
              <EventEditor />
            </Center>
            <RightPanel />
          </Main>
          <BottomBar />
        </Work>
      </Shell>
    </>
  );
}
